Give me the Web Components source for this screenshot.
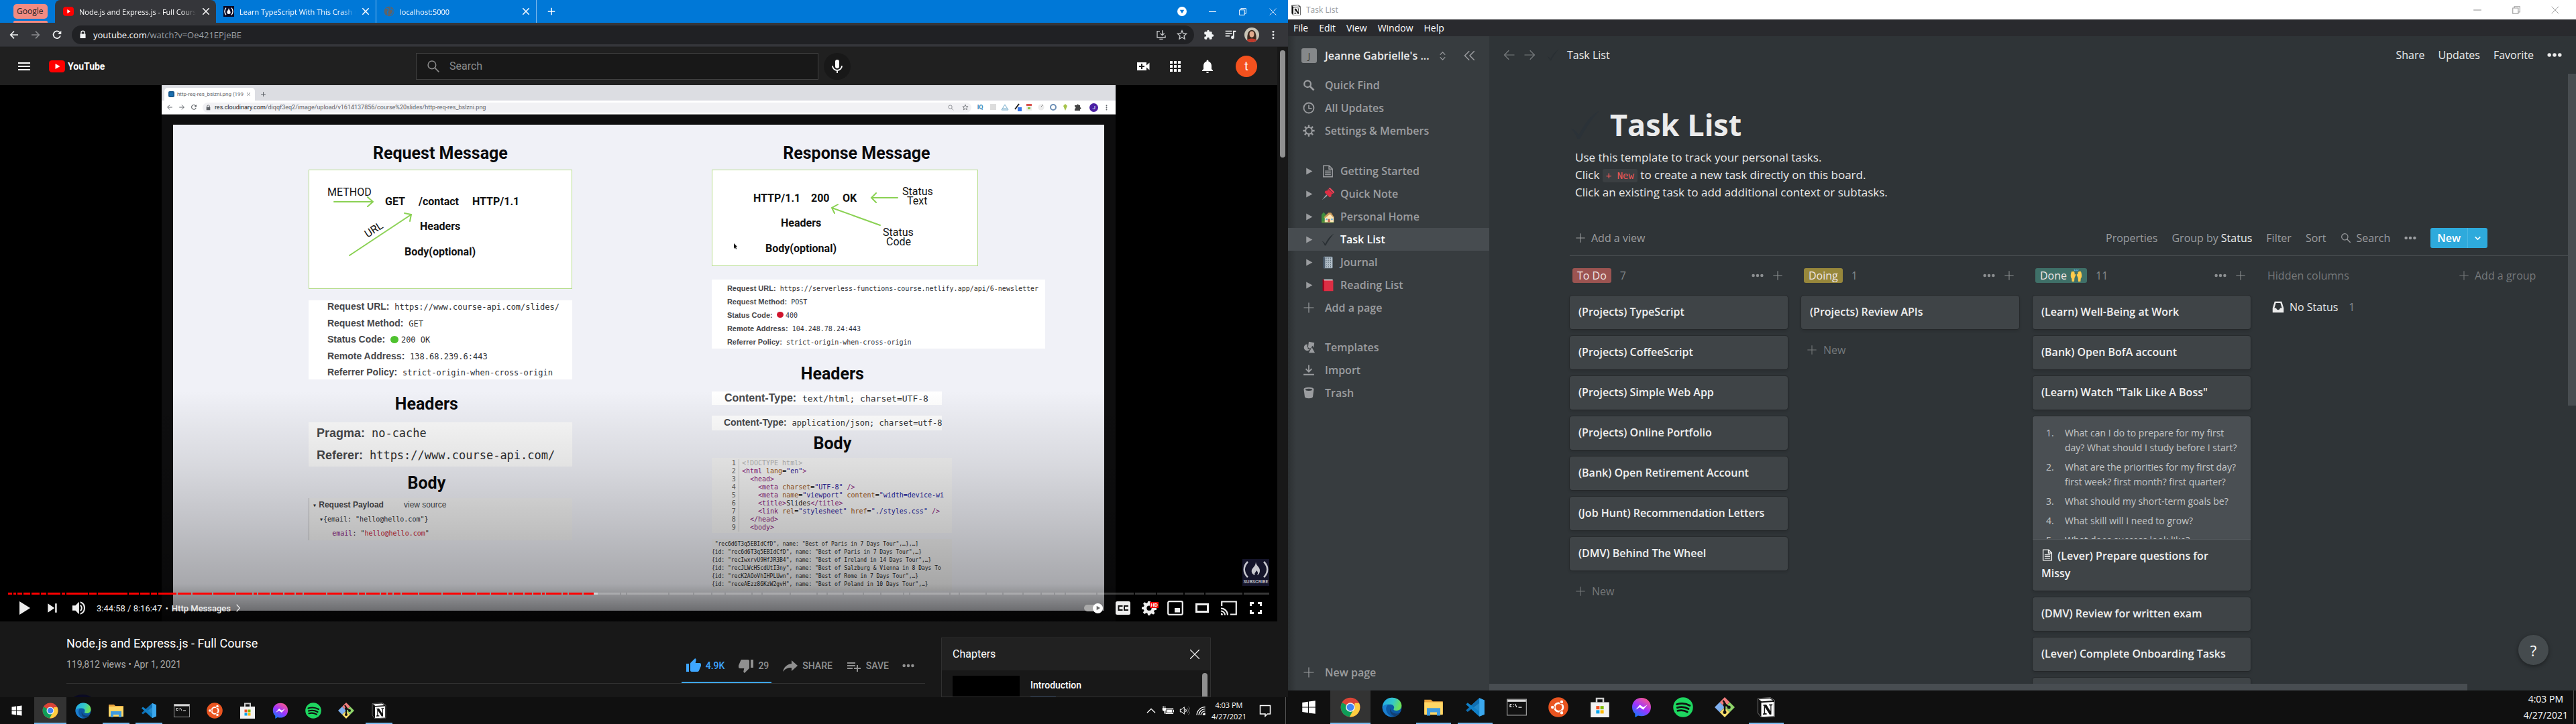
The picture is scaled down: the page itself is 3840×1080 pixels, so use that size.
<!DOCTYPE html>
<html lang="en">
<head>
<meta charset="utf-8">
<title>Desktop</title>
<style>
  html, body { height: 100%; }
  body { margin: 0; background: #000; overflow: hidden; font-family: "Open Sans", "Noto Sans", sans-serif; }
</style>
</head>
<body>
<dual-desktop></dual-desktop>
<script>
/* ---------- shared ---------- */
const BASE = `
  *, *::before, *::after { box-sizing: border-box; }
  button { appearance: none; border: 0; margin: 0; padding: 0; background: none; color: inherit; font: inherit; display: inline-flex; align-items: center; cursor: pointer; white-space: nowrap; }
  a { color: inherit; text-decoration: none; }
  h1, h2, h3, p, ol, ul, dl, dd, dt { margin: 0; padding: 0; }
  .grow { flex: 1; min-width: 0; }
`;
class Part extends HTMLElement {
  connectedCallback() {
    if (this.shadowRoot) return;
    const root = this.attachShadow({ mode: 'open' });
    const t = document.createElement('template');
    t.innerHTML = `<style>${BASE}${this.styles()}</style>${this.view()}`;
    root.append(t.content.cloneNode(true));
  }
  styles() { return ''; }
  view() { return '<slot></slot>'; }
}

/* ---------- icons, 24 x 24 grid ---------- */
const line = (d, w = 2, extra = '') => `<path d="${d}" fill="none" stroke="currentColor" stroke-width="${w}" ${extra}/>`;
const fill = (d, extra = '') => `<path d="${d}" fill="currentColor" ${extra}/>`;
const ICONS = {
  back: line('M21 12H4M12 4l-8 8 8 8', 2.4),
  forward: line('M3 12h17M12 4l8 8-8 8', 2.4),
  thinback: line('M22 12H2M11 3l-9 9 9 9', 1.6),
  thinforward: line('M2 12h20M13 3l9 9-9 9', 1.6),
  reload: line('M19.5 14a8 8 0 1 1-2-8l2.5 2.500', 2.6) + fill('M21.500 2.500v8h-8z'),
  lock: fill('M6 10V7a6 6 0 0 1 12 0v3h1.500v12h-15V10zM8.500 10h7V7a3.500 3.500 0 0 0-7 0z', 'fill-rule="evenodd"'),
  close: line('M4 4l16 16M20 4L4 20', 2.6),
  thinclose: line('M3 3l18 18M21 3L3 21', 1.6),
  plus: line('M12 3v18M3 12h18', 2.6),
  thinplus: line('M12 2v20M2 12h20', 1.6),
  minimize: line('M2 12h20', 2),
  restore: line('M3 7h14v14H3zM7 7V3h14v14h-4', 1.8),
  dropdown: '<circle cx="12" cy="12" r="12" fill="#fff"/><path d="M6.500 8h11L12 17z" fill="#0078d7"/>',
  globe: '<circle cx="12" cy="12" r="11" fill="#5f6368"/><path d="M5 5c5 0 7 2 5 5s-3 4-1 6-1 5-2 5M15 2c-1 4 1 6 3 6s4 2 3 5-3 5-6 7" fill="none" stroke="#0078d7" stroke-width="2"/>',
  install: line('M9 4H3v14h18v-5M8 21.500h8', 2) + line('M14.500 2v10M10 8.500l4.500 4.500L19 8.500', 2),
  star: line('M12 2.500l2.800 6.500 7 .6-5.300 4.600 1.600 6.900L12 17.500l-6.100 3.600 1.600-6.900L2.200 9.600l7-.6z', 2),
  puzzle: fill('M20.500 11H19V7c0-1.100-.9-2-2-2h-4V3.500a2.500 2.500 0 0 0-5 0V5H4c-1.100 0-2 .9-2 2v3.800h1.500a2.700 2.700 0 0 1 0 5.400H2V20c0 1.100.9 2 2 2h3.800v-1.500a2.700 2.700 0 0 1 5.400 0V22H17c1.100 0 2-.9 2-2v-4h1.500a2.500 2.500 0 0 0 0-5z'),
  queue: line('M1 5h14M1 10h14M1 15h9', 2.2) + fill('M17 4h6v3h-3.500v11a3.300 3.300 0 1 1-2.500-3.200z'),
  vdots: '<g fill="currentColor"><circle cx="12" cy="4" r="2.500"/><circle cx="12" cy="12" r="2.500"/><circle cx="12" cy="20" r="2.500"/></g>',
  hdots: '<g fill="currentColor"><circle cx="3.500" cy="12" r="3"/><circle cx="12" cy="12" r="3"/><circle cx="20.500" cy="12" r="3"/></g>',
  menu: fill('M3 6h18v2H3zM3 11h18v2H3zM3 16h18v2H3z'),
  ytlogo: '<rect y="3" width="24" height="18" rx="4.500" fill="#f00"/><path d="M9.500 8v8l7-4z" fill="#fff"/>',
  ytfav: '<rect y="2" width="24" height="20" rx="6" fill="#f00"/><path d="M9.500 7.500v9l7-4.500z" fill="#fff"/>',
  search: '<circle cx="9.500" cy="9.500" r="7" fill="none" stroke="currentColor" stroke-width="1.800"/>' + line('M14.500 14.500L22 22', 2),
  boldsearch: '<circle cx="9.500" cy="9.500" r="6.500" fill="none" stroke="currentColor" stroke-width="3"/>' + line('M14 14l8 8', 3.6),
  mic: '<rect x="9" y="2" width="6" height="13" rx="3" fill="currentColor"/>' + line('M5 11a7 7 0 0 0 14 0M12 18v4', 1.8),
  create: fill('M17 10.500V6H3v12h14v-4.500l4.500 4V6.500zM14 13h-3v3H9v-3H6v-2h3V8h2v3h3z', 'fill-rule="evenodd"'),
  apps: fill('M4 4h4v4H4zM10 4h4v4h-4zM16 4h4v4h-4zM4 10h4v4H4zM10 10h4v4h-4zM16 10h4v4h-4zM4 16h4v4H4zM10 16h4v4h-4zM16 16h4v4h-4z'),
  bell: fill('M12 22a2 2 0 0 0 2-2h-4a2 2 0 0 0 2 2zM18 16v-5c0-3-1.600-5.600-4.500-6.300V4a1.500 1.500 0 0 0-3 0v.7C7.600 5.400 6 8 6 11v5l-2 2v1h16v-1z'),
  play: fill('M5 2l16 10L5 22z'),
  next: fill('M4 4l12 8-12 8zM17 4h3v16h-3z'),
  volume: fill('M2 8v8h5l6 6V2L7 8z') + line('M15 7.500c3 2 3 7 0 9M15 2.500c9 3 9 16 0 19', 2.2),
  chevr: line('M8 3l8 9-8 9', 2),
  chevd: line('M5 9l7 7 7-7', 3),
  chevu: line('M3 17l9-9 9 9', 2),
  cc: '<rect x="1" y="2" width="22" height="20" rx="2.500" fill="#eee"/><path d="M10.500 10V9h-5v6h5v-1M19 10V9h-5v6h5v-1" fill="none" stroke="#111" stroke-width="2"/>',
  gear: fill('M10 1h4l.6 3.200 2 .9L19.400 3.300l2.600 3-1.700 2.600.5 2L24 12v3l-3.300.6-1 2 1.700 2.700-2.700 2.400-2.600-1.700-2 .8L13.500 24h-3.400l-.8-3.200-2-.9-2.800 1.800-2.500-2.600 1.900-2.700-.8-1.900L0 14v-3.500l3.200-.7.900-2L2.300 5l2.500-2.500 2.600 1.800 2-.9zM12 8.200a4 4 0 1 0 0 8 4 4 0 0 0 0-8z', 'fill-rule="evenodd"'),
  mini: '<rect x="1.200" y="2.200" width="21.600" height="19.600" rx="2" fill="none" stroke="currentColor" stroke-width="2.200"/>' + fill('M11 12h8v6.500h-8z'),
  theater: '<rect x="3.500" y="6.500" width="17" height="11" fill="none" stroke="currentColor" stroke-width="3"/>',
  cast: line('M1.200 9V2.500h21.600v19H14', 2.2) + line('M0 12.500A10 10 0 0 1 10 22.500M0 16.500a6 6 0 0 1 6 6', 2) + fill('M0 19.500a3 3 0 0 1 3 3H0z'),
  full: line('M4.500 9V4.500H9M15 4.500h4.500V9M19.500 15v4.500H15M9 19.500H4.500V15', 3),
  like: fill('M1 21h4V9H1zM23 10c0-1.100-.9-2-2-2h-6.300l1-4.600v-.3c0-.4-.2-.8-.5-1.100L14.200 1 7.600 7.600C7.200 8 7 8.500 7 9v10c0 1.100.9 2 2 2h9c.8 0 1.500-.5 1.800-1.200l3-7c.1-.3.200-.5.200-.8z'),
  dislike: fill('M15 3H6c-.8 0-1.500.5-1.800 1.200l-3 7c-.1.200-.2.500-.2.700v2c0 1.100.9 2 2 2h6.300l-1 4.600v.3c0 .4.200.8.500 1.100L9.800 23l6.600-6.600c.4-.4.600-.9.600-1.400V5c0-1.100-.9-2-2-2zm4 0v12h4V3z'),
  share: fill('M14 9V4l9 8-9 8v-5.100c-6 0-10 1.900-13 6.100 1.500-6 5-11 13-12z'),
  save: fill('M2 6h12v2H2zM2 10h12v2H2zM2 14h8v2H2zM20 14h-2v-4h-2v4h-4v2h4v4h2v-4h4v-2z', 'transform="translate(0 1)"'),
  power: '<rect x="8" y="8" width="14" height="10" fill="none" stroke="currentColor" stroke-width="1.500"/><path d="M10 10h10v6H10zM22.500 11h1.500v4h-1.500zM1 7h7v3a3 3 0 0 1-2.500 3v5H4v-5a3 3 0 0 1-3-3zM2 3h1.500v4H2zM5.500 3H7v4H5.500z" fill="currentColor"/>',
  speaker: line('M2 9h4l5-5v16l-5-5H2z', 1.500) + line('M14 9c2 2 2 4 0 6', 1.6) + line('M17 6c4 4 4 8 0 12M20 3c6 6 6 12 0 18', 1.4, 'opacity=".45"'),
  wifi: fill('M16 22a5 5 0 0 1 6-5v5z') + line('M12 22a10 10 0 0 1 10-9M7.500 22A14 14 0 0 1 22 8.500M3 22A19 19 0 0 1 22 4', 2),
  note: line('M3 3h18v15h-5l-4 4v-4H3z', 1.8),
  doublechev: line('M11 3l-9 9 9 9M21 3l-9 9 9 9', 2),
  updown: line('M6 9l6-6 6 6M6 15l6 6 6-6', 2),
  clock: '<circle cx="12" cy="12" r="10" fill="none" stroke="currentColor" stroke-width="2.400"/>' + line('M12 6v7h6', 2.2),
  cog: '<circle cx="12" cy="12" r="6.500" fill="none" stroke="currentColor" stroke-width="2.600"/>' + line('M12 .5v5M12 18.500v5M.5 12h5M18.500 12h5M3.900 3.900l3.500 3.500M16.600 16.600l3.500 3.500M3.900 20.100l3.500-3.500M16.600 7.400l3.500-3.500', 3.2),
  tri: fill('M6 5l13 7-13 7z'),
  doc: line('M3.500 1.500h11l6 6v15h-17zM14 1.500V8h6.500', 1.8) + line('M6.500 11.500h11M6.500 15h11M6.500 18.500h11', 1.8),
  pin: '<path d="M1 23l8-10 2 2z" fill="#9aa8b2"/><path d="M12 2l10 9-3 1-1 5-3 1-9-9 1-3 5-1z" fill="#dd2e44"/><path d="M13 1l3-1 8 8-1 3z" fill="#f0485c"/>',
  house: '<path d="M0 23V8l4-5 5 6v14z" fill="#3e8e3e"/><path d="M1 20h22v3H1z" fill="#5c913b"/><path d="M6 12l8-7 9 7v10H6z" fill="#ffe8b6"/><path d="M4 13l9-9 5 0 6 9-3-1-5-5-9 7z" fill="#c79a5a"/><path d="M12 16h4v6h-4z" fill="#c1694f"/><path d="M8 15h3v3H8zM18 15h3v3h-3z" fill="#55acee"/>',
  check: '<path d="M1 15c2 0 4 2 6 5C11 12 16 5 23 1 17 8 12 15 8 23H6c-1-3-3-6-5-8z" fill="currentColor"/>',
  journal: '<rect x="3" y="1" width="18" height="22" rx="2" fill="#8899a6"/><path d="M7 3h13v19H7z" fill="#b9c6d0"/><path d="M7 5h13M7 9h13M7 13h13M7 17h13M9 3v19M13 3v19M17 3v19" stroke="#66757f" stroke-width="1.300" stroke-dasharray="2 2"/><path d="M3 2h3v21H3z" fill="#3b4a5a"/>',
  book: '<path d="M3 1h18v3H3z" fill="#dfe6ea"/><path d="M2 2c0-1 2-1 3-1v22H4c-1 0-2-1-2-2z" fill="#a0041e"/><path d="M5 3h17v20H5z" fill="#dd2e44"/>',
  templates: fill('M10 12h-1V6a6.500 6.500 0 1 0 5 10.500L10 15z') + fill('M12 1l11 2-1.500 10-2-4-5 6-4-3z') + fill('M18 12l6 11H12z'),
  import: line('M12 2v13M6 9.500l6 6 6-6M1.500 21h21', 2.4),
  trash: fill('M12 1C6 1 2 2.500 2 5l2 15c.5 2 4 3 8 3s7.500-1 8-3l2-15c0-2.500-4-4-10-4zm0 2.500c4.500 0 7 1.100 7 2.200S16.500 8 12 8 5 6.800 5 5.700 7.500 3.500 12 3.500z', 'fill-rule="evenodd"'),
  inbox: fill('M5 1h14l4 13v9H1v-9zm2.500 3l-3 10H8c.5 2 2 3.500 4 3.500s3.500-1.500 4-3.500h3.500l-3-10z', 'fill-rule="evenodd"'),
  hands: '<path d="M1 12c0-2 1-7 2-8s1.500 0 1.500 1C5 3 6 3 6.500 4S8 4 8.500 5.500 9 9 8.800 10c1-1.500 2.700-.5 2.200 1l-2.500 6L8 24H3.500L3 18c-1.500-1.500-2-4-2-6zM23 12c0-2-1-7-2-8s-1.500 0-1.500 1C19 3 18 3 17.500 4S16 4 15.500 5.500 15 9 15.200 10c-1-1.500-2.700-.5-2.200 1l2.500 6 .5 7h4.500l.5-6c1.500-1.500 2-4 2-6z" fill="#ffcb4c"/><path d="M8 0l1.500 3M12 0v3M16 0l-1.500 3" stroke="#55acee" stroke-width="1.800"/>',
  fcc: '<rect width="24" height="24" fill="#0a0a23"/><path d="M6 4C2 9 2 15 6 20M18 4c4 5 4 11 0 16" stroke="#fff" stroke-width="2" fill="none"/><path d="M12 4c0 4 4 6 4 10a4 4 0 0 1-8 0c0-3 3-4 4-10z" fill="#fff"/>',
  person: '<circle cx="12" cy="12" r="12" fill="#c9c4b6"/><path d="M5 21c-1-6 0-17 7-17s8 11 7 17l-7 3z" fill="#3d2a20"/><ellipse cx="12" cy="11" rx="3.800" ry="5" fill="#e0a98c"/><path d="M4 21c2-4 14-4 16 0a12 12 0 0 1-16 0z" fill="#c0392b"/>',
  /* task bar */
  win: fill('M3 5.500l8-1.200v7.200H3zM12 4.200L21 3v8.500h-9zM3 12.500h8v7.200l-8-1.200zM12 12.500h9V21l-9-1.200z'),
  chrome: '<circle cx="12" cy="12" r="11.500" fill="#db4437"/><path d="M2 6.300A11.500 11.500 0 0 0 11 23.400L17 14.800 12 12z" fill="#0f9d58"/><path d="M23.500 12A11.500 11.500 0 0 1 11 23.500L17.200 12V7H22.400A11.500 11.500 0 0 1 23.500 12z" fill="#ffcd40"/><circle cx="12" cy="12" r="5.500" fill="#f1f1f1"/><circle cx="12" cy="12" r="4.300" fill="#4285f4"/>',
  edge: '<defs><linearGradient id="ea" x1="0" y1="0" x2="1" y2=".3"><stop offset="0" stop-color="#1fa7e8"/><stop offset=".6" stop-color="#35c8c8"/><stop offset="1" stop-color="#6be05a"/></linearGradient></defs><circle cx="12" cy="12" r="11.500" fill="#0c59a4"/><path d="M.6 12C1 5 6 .5 12 .5c7 0 11.500 4.500 11.500 9.500 0 4-3 6-6.500 6-2.500 0-3.500-1-3-2 1.500-2 0-5.500-4-5.500C5 8.500 1.500 11 .6 12z" fill="url(#ea)"/><path d="M.5 12C2 9 5 8.300 8 8.300c-3 2-4 6-2 9.700 2 4 6 5.500 8 5.300C7 24.500.5 19 .5 12z" fill="#1b7fd0"/><path d="M10 13c0 4 3 6.500 7 6.500 2 0 3.500-.5 4.500-1-1 2-3 3.700-5 4.300-5-.5-8-5-6.500-9.800z" fill="#123f73"/>',
  explorer: '<path d="M1 3h8l2 2h12v15H1z" fill="#e8a33d"/><path d="M1 6h22v15H1z" fill="#ffd766"/><path d="M4 13h16v9h-4v-4H8v4H4z" fill="#3f9be0"/>',
  vscode: '<path d="M17 1l6 2.500v17L17 23 5 12z" fill="#2489ca"/><path d="M17 1L1 15.500l2 2L17 7z" fill="#0f6fb3"/><path d="M17 23L1 8.500l2-2L17 17z" fill="#1080c8"/><path d="M17 1l6 2.500v17L17 23z" fill="#3ba8ee"/>',
  terminal: '<rect x=".5" y="2.500" width="23" height="19" fill="#111" stroke="#9a9a9a"/><path d="M1 3h22v2.500H1z" fill="#d8d8d8"/><path d="M4 8.500h2M4 8.500v3h2M8 8v1M8 10.500v1M10 8l2 4M14 12h4" stroke="#eee" fill="none"/>',
  ubuntu: '<circle cx="12" cy="12" r="11.800" fill="#e95420"/><circle cx="12.500" cy="12" r="5" fill="none" stroke="#fff" stroke-width="2.200"/><g fill="#fff" stroke="#e95420" stroke-width="1"><circle cx="5" cy="12" r="2.300"/><circle cx="16" cy="5.500" r="2.300"/><circle cx="16" cy="18.500" r="2.300"/></g>',
  store: '<path d="M8 6V1.500h8V6" fill="none" stroke="#ccc" stroke-width="2"/><path d="M1 6h22v18H1z" fill="#f2f2f2"/><path d="M7.500 10.500h4v4h-4z" fill="#f25022"/><path d="M12.500 10.500h4v4h-4z" fill="#7fba00"/><path d="M7.500 15.500h4v4h-4z" fill="#00a4ef"/><path d="M12.500 15.500h4v4h-4z" fill="#ffb900"/>',
  messenger: '<defs><linearGradient id="ma" x1=".2" y1="1" x2=".8" y2="0"><stop offset="0" stop-color="#0a7cff"/><stop offset=".5" stop-color="#a033ff"/><stop offset="1" stop-color="#ff5c87"/></linearGradient></defs><path d="M12 .8C5.500.8.800 5.500.800 11.700c0 3.300 1.300 6.100 3.500 8.100V24l3.600-2c1.300.4 2.700.6 4.100.6 6.500 0 11.200-4.700 11.200-10.900S18.500.8 12 .8z" fill="url(#ma)"/><path d="M5 15l5-6 4 3 5-3-5 6-4-3z" fill="#fff"/>',
  spotify: '<circle cx="12" cy="12" r="11.800" fill="#1ed760"/><path d="M4.500 8.500c5-1.600 11-1 15.500 1.500M5 12.500c4.500-1.300 9.500-.8 13.500 1.500M5.500 16.200c4-1 8-.6 11.500 1.400" stroke="#101010" stroke-width="2.200" fill="none" stroke-linecap="round"/>',
  git: '<path d="M12 0l6 6-6 6-6-6z" fill="#f27e7e"/><path d="M6 6l6 6-6 6-6-6z" fill="#7fb0f0"/><path d="M18 6l6 6-6 6-6-6z" fill="#8fd46a"/><path d="M12 12l6 6-6 6-6-6z" fill="#f7dd6c"/><path d="M10 4l2 3v11M12 8l5 4" stroke="#111" stroke-width="2" fill="none"/><circle cx="12" cy="18" r="2" fill="#111"/><circle cx="12" cy="9" r="2" fill="#111"/><circle cx="17" cy="12" r="2" fill="#111"/>',
  notion: '<path d="M2 1.500L17 .5l5 3.500v19l-16 1-4-5z" fill="#111" stroke="#777" stroke-width=".8"/><path d="M3 2.500l13.500-1L20 4 6.500 5z" fill="#fff"/><path d="M6 6.500l15-1v17L6 23.300z" fill="#fff"/><path d="M8.500 9l3.500-.2 5 8V10l-1.700-.3V8.500l4-.2v1.200L18 10v10.500l-2 .2-5.500-8.500V19l2 .4v1.100l-4.500.3v-1.200l1.300-.5V10.200L8 10z" fill="#111"/>'
};
class UiIcon extends Part {
  styles() { const s = this.getAttribute('size') || 24; return `:host{display:inline-flex;flex:none;width:${s}px;height:${s}px} svg{width:100%;height:100%;display:block}`; }
  view() { return `<svg viewBox="0 0 24 24" aria-hidden="true">${ICONS[this.getAttribute('name')]}</svg>`; }
}
const ic = (n, s = 24) => `<ui-icon name="${n}" size="${s}"></ui-icon>`;
const ib = (label, n, s = 24, c = '') => `<button class="${c}" aria-label="${label}">${ic(n, s)}</button>`;

/* ---------- desktop ---------- */
class DualDesktop extends Part {
  styles() { return `
    :host { display: flex; height: 100vh; }
    .mon { flex: 1; min-width: 0; display: flex; flex-direction: column; overflow: hidden; }
    .mon > :first-child { flex: 1; min-height: 0; }
    .b { --bar: 50px; --start: 61px; --cell: 60px; --gap: 2px; --under: 52px; --clock: 14px; --clockline: 24px; }
    .tray { display: flex; align-items: center; gap: 8px; }`; }
  view() { return `
    <div class="mon a"><browser-window></browser-window>
      <task-bar icon="24"><span slot="tray" class="tray">${ic('chevu', 16)}${ic('power', 18)}${ic('speaker', 16)}${ic('wifi', 16)}</span><ui-icon slot="end" name="note" size="20"></ui-icon></task-bar></div>
    <div class="mon b"><notion-window></notion-window><task-bar icon="30"></task-bar></div>`; }
}
class TaskBar extends Part {
  styles() { return `
    :host { display: flex; flex: none; height: var(--bar, 40px); background: #101010; color: #fff; }
    nav { display: flex; gap: var(--gap, 1px); flex: 1; }
    button { width: var(--cell, 48px); flex-direction: column; justify-content: center; position: relative; }
    .start { width: var(--start, 50px); }
    .on::after { content: ""; position: absolute; bottom: 0; height: 2px; width: var(--under, 40px); background: #76b9ed; }
    .active { background: #333; }
    .active::after { width: 100%; }
    .clock { display: flex; flex-direction: column; text-align: center; justify-content: center; font-size: var(--clock, 11px); line-height: var(--clockline, 17px); padding: 0 8px; }
    ::slotted([slot=end]) { align-self: center; margin: 0 20px 0 10px; }
    .peek { border-left: 1px solid #555; width: 4px; }`; }
  view() {
    const s = this.getAttribute('icon');
    const apps = [['Chrome', 'chrome', 'on active'], ['Edge', 'edge', ''], ['File Explorer', 'explorer', 'on'], ['Visual Studio Code', 'vscode', 'on'], ['Terminal', 'terminal', ''], ['Ubuntu', 'ubuntu', ''], ['Store', 'store', ''], ['Messenger', 'messenger', ''], ['Spotify', 'spotify', ''], ['Git', 'git', ''], ['Notion', 'notion', 'on']];
    return `<nav>${ib('Start', 'win', s - 4, 'start')}${apps.map(a => ib(a[0], a[1], s, a[2])).join('')}</nav>
      <slot name="tray"></slot><div class="clock"><span>4:03 PM</span><span>4/27/2021</span></div><slot name="end"></slot><span class="peek"></span>`;
  }
}

/* ---------- browser ---------- */
class BrowserTab extends Part {
  styles() { return `
    :host { display: flex; align-items: center; width: 239px; height: 34px; padding: 0 8px 0 11px; gap: 8px; font-size: 11px; color: #fff; }
    :host([active]) { background: #35363a; border-radius: 8px 8px 0 0; width: 240px; padding-left: 12px; }
    :host([sep]) { border-right: 1px solid #7fbbeb; }
    .t { flex: 1; overflow: hidden; white-space: nowrap; mask-image: linear-gradient(90deg, #000 88%, transparent); }`; }
  view() { return `${ic(this.getAttribute('icon'), 16)}<span class="t"><slot></slot></span>${ib('Close tab', 'close', 14)}`; }
}
class BrowserWindow extends Part {
  styles() { return `
    :host { display: flex; flex-direction: column; background: #181818; overflow: hidden; }
    .tabs { display: flex; align-items: center; height: 34px; flex: none; background: #0078d7; color: #fff; padding-left: 20px; }
    .group { align-self: stretch; display: flex; flex-direction: column; justify-content: space-between; margin-right: 11px; padding-top: 6px; }
    .group b { font-weight: 400; font-size: 12px; line-height: 22px; background: #f28b82; color: #202124; border-radius: 5px; padding: 0 5px; width: 51px; }
    .group i { height: 3px; background: #f28b82; border-radius: 2px 2px 0 0; }
    .new { margin-left: 15px; }
    .win { display: flex; gap: 32px; margin-right: 16px; }
    .bar { display: flex; align-items: center; height: 36px; flex: none; background: #35363a; border-bottom: 1px solid #2a2b2e; color: #f1f3f4; padding: 0 6px 0 13px; gap: 16px; }
    .url { display: flex; align-items: center; height: 28px; flex: 1; background: #202124; border-radius: 14px; padding: 0 10px; gap: 9px; font-size: 13px; margin-left: -2px; }
    .url span { color: #9aa0a6; } .url em { font-style: normal; color: #fff; }
    .dim { color: #8a8b8e; } .soft { color: #c6c8ca; margin-left: 6px; }
    .ext { display: flex; margin-left: -10px; }
    .ext button { width: 32px; justify-content: center; }
    .page { display: flex; flex: 1; min-height: 0; }
    .content { flex: 1; min-width: 0; display: flex; flex-direction: column; }
    .sb { width: 16px; background: #181818; padding: 5px 4px; }
    .sb i { display: block; height: 160px; border-radius: 4px; background: #909090; }`; }
  view() { return `
    <div class="tabs"><div class="group"><b>Google</b><i></i></div>
      <browser-tab active icon="ytfav">Node.js and Express.js - Full Course</browser-tab>
      <browser-tab sep icon="fcc">Learn TypeScript With This Crash Course</browser-tab>
      <browser-tab sep icon="globe">localhost:5000</browser-tab>
      ${ib('New tab', 'plus', 14, 'new')}<span class="grow"></span>
      <div class="win">${ib('Tab search', 'dropdown', 14)}${ib('Minimize', 'minimize', 13)}${ib('Restore', 'restore', 13)}${ib('Close', 'thinclose', 13)}</div></div>
    <div class="bar">${ib('Back', 'back', 16)}${ib('Forward', 'forward', 16, 'dim')}${ib('Reload', 'reload', 16)}
      <div class="url" role="textbox" tabindex="0" aria-label="Address">${ic('lock', 13)}<span><em>youtube.com</em>/watch?v=Oe421EPjeBE</span><span class="grow"></span>
      ${ib('Install', 'install', 16, 'soft')}${ib('Bookmark', 'star', 16, 'soft')}</div>
      <div class="ext">${ib('Extensions', 'puzzle', 16)}${ib('Media', 'queue', 17)}${ib('Profile', 'person', 22)}${ib('More', 'vdots', 14)}</div></div>
    <div class="page"><div class="content"><yt-header></yt-header><video-player></video-player><video-info></video-info></div><div class="sb"><i></i></div></div>`; }
}
class YtHeader extends Part {
  styles() { return `
    :host { display: flex; align-items: center; height: 57px; flex: none; background: #202020; color: #fff; padding: 0 30px 0 24px; font-family: Roboto, sans-serif; }
    .logo { display: flex; align-items: center; gap: 4px; margin-left: 25px; font: 700 14px/24px Roboto, sans-serif; width: 150px; }
    .mid { display: flex; flex: 1; justify-content: center; gap: 8px; padding-right: 27px; }
    label { display: flex; align-items: center; gap: 14px; width: 600px; height: 40px; border: 1px solid #404040; background: #181818; padding: 0 15px; color: #8c8c8c; }
    input { flex: 1; border: 0; background: none; outline: 0; color: #fff; font: 16px/24px Roboto, sans-serif; padding: 0; }
    input::placeholder { color: #8c8c8c; opacity: 1; }
    .mic { width: 40px; height: 40px; border-radius: 50%; background: #181818; justify-content: center; }
    .right { display: flex; align-items: center; gap: 24px; }
    .av { width: 32px; height: 32px; border-radius: 50%; background: #f4511e; justify-content: center; margin-left: 6px; font-size: 18px; }`; }
  view() { return `${ib('Guide', 'menu', 24)}<a class="logo" href="#">${ic('ytlogo', 24)}<span>YouTube</span></a>
    <div class="mid"><label aria-label="Search">${ic('search', 20)}<input placeholder="Search"></label><button class="mic" aria-label="Voice search">${ic('mic', 24)}</button></div>
    <div class="right">${ib('Create', 'create', 24)}${ib('Apps', 'apps', 24)}${ib('Notifications', 'bell', 24)}<button class="av">t</button></div>`; }
}

/* ---------- player ---------- */
const MARKS = [12,20,26,35,47,61,71,92,99,133,146,192,209,225,236,265,287,318,352,378,385,404,424,441,453,488,512,535,546,568,578,587,599,625,660,689,711,732,758,766,782,795,808,814,839,848,870,926,935,998,1034,1061,1081,1121,1136,1178,1218,1233,1257,1287,1313,1347,1356,1416,1430,1470,1495,1525,1552,1572,1588,1635,1691,1724,1765,1796,1853,1893];
const PLAYED = 885;
class VideoPlayer extends Part {
  styles() { return `
    :host { display: flex; justify-content: center; position: relative; height: 800px; flex: none; background: #000; overflow: hidden; font-family: Roboto, sans-serif; color: #eee; }
    .shade { position: absolute; inset: 0; background: linear-gradient(180deg, transparent 57%, rgba(0,0,0,.03) 61%, rgba(0,0,0,.1) 71%, rgba(0,0,0,.2) 82%, rgba(0,0,0,.3) 93%, rgba(0,0,0,.55) 98%, rgba(0,0,0,.7)); }
    .chrome { position: absolute; left: 12px; right: 12px; bottom: 0; }
    .track { display: flex; gap: 2px; height: 3px; }
    .track i { background: rgba(255,255,255,.22); }
    .track .p { background: #f00; }
    .track .h { background: linear-gradient(90deg, #f00 27%, rgba(255,255,255,.6) 27% 38%, rgba(255,255,255,.22) 38%); }
    .row { display: flex; align-items: center; height: 40px; gap: 16px; padding: 0 8px 0 12px; font-size: 13px; }
    .next { margin: 0 2px 0 4px; }
    .time { display: flex; align-items: center; gap: 5px; white-space: nowrap; }
    .time button { gap: 4px; font-weight: 500; }
    .auto { width: 28px; height: 10px; border-radius: 5px; background: #aaa; justify-content: flex-end; margin-right: 2px; }
    .auto span { width: 15px; height: 15px; border-radius: 50%; background: #fff; color: #666; display: flex; align-items: center; justify-content: center; }
    .row button { position: relative; }
    .hd { position: absolute; right: -3px; top: 2px; background: #e00; color: #fff; font: 700 8px/9px Roboto, sans-serif; padding: 0 1px; }
    .badge { position: absolute; right: 12px; bottom: 53px; width: 40px; height: 40px; background: #15152b; color: #c8c8ce; display: flex; flex-direction: column; align-items: center; font: 500 7px/9px Roboto, sans-serif; }
    .badge svg { width: 40px; height: 30px; }`; }
  view() {
    const seg = MARKS.slice(0, -1).map((m, i) => {
      const n = MARKS[i + 1];
      return `<i class="${n <= PLAYED ? 'p' : m < PLAYED ? 'h' : ''}" style="flex:${n - m - 2} 1 0"></i>`;
    }).join('');
    const bs = (l, n, s) => ib(l, n, s);
    return `<screen-share></screen-share><div class="shade"></div>
      <div class="badge"><svg viewBox="0 0 40 30"><path d="M8 4C1 11 1 20 8 27M32 4c7 7 7 16 0 23" fill="none" stroke="currentColor" stroke-width="2.500"/><path d="M20 4c0 6 7 8 6 14-.5 4-3 6-4 6 2-3 1-5-1-7-1 3-4 4-2 7-4-1-6-4-5-8 2-4 6-6 6-12z" fill="currentColor"/></svg>SUBSCRIBE</div>
      <div class="chrome"><div class="track">${seg}</div><div class="row">${bs('Play', 'play', 24)}<button class="next" aria-label="Next">${ic('next', 20)}</button>${bs('Mute', 'volume', 22)}
      <span class="time"><span>3:44:58 / 8:16:47</span><span>•</span><button>Http Messages ${ic('chevr', 14)}</button></span><span class="grow"></span>
      <button class="auto" aria-label="Autoplay"><span>${ic('play', 8)}</span></button>${bs('Captions', 'cc', 24)}<button aria-label="Settings">${ic('gear', 22)}<span class="hd">HD</span></button>${bs('Miniplayer', 'mini', 24)}${bs('Theater mode', 'theater', 24)}${bs('Cast', 'cast', 24)}${bs('Full screen', 'full', 24)}</div></div>`;
  }
}
class ScreenShare extends Part {
  styles() { return `
    :host { display: flex; flex-direction: column; height: 100%; aspect-ratio: 16 / 9; background: #0e0e0f; font-family: Roboto, sans-serif; color: #5f6368; }
    .tabs { display: flex; align-items: flex-end; height: 23px; background: #dcdde2; padding: 0 4px; gap: 8px; }
    .tab { display: flex; align-items: center; width: 135px; height: 19px; padding: 0 6px; gap: 4px; background: #fff; border-radius: 5px 5px 0 0; font-size: 8px; white-space: nowrap; overflow: hidden; }
    .tab span { flex: 1; overflow: hidden; }
    .tabs > ui-icon { margin-bottom: 5px; }
    .fav { width: 9px; height: 9px; background: #1a6fb0; border: 2px solid #1a5a90; border-radius: 2px; }
    .bar { display: flex; align-items: center; height: 21px; background: #fff; border-bottom: 1px solid #aaa; padding: 0 9px 0 7px; gap: 8px; }
    .url { flex: 1; display: flex; align-items: center; gap: 5px; height: 15px; border-radius: 8px; background: #f1f1f4; padding: 0 4px; font-size: 9px; }
    .url em { font-style: normal; color: #202124; }
    .j { width: 13px; height: 13px; border-radius: 50%; background: #4b1fa3; color: #fff; font-size: 8px; line-height: 13px; text-align: center; }
    .x { font-size: 9px; line-height: 12px; font-weight: 700; color: #3b87b5; width: 10px; text-align: center; }
    slide-deck { flex: 1; margin: 15px 17px 16px; }
    .x, .bar > ui-icon { flex: none; }`; }
  view() { return `
    <div class="tabs"><div class="tab"><i class="fav"></i><span>http-req-res_bslzni.png (1998</span>${ic('close', 7)}</div>${ic('plus', 9)}</div>
    <div class="bar">${ic('back', 10)}${ic('forward', 10)}${ic('reload', 10)}
      <div class="url">${ic('lock', 9)}<span><em>res.cloudinary.com</em>/diqqf3eq2/image/upload/v1614137856/course%20slides/http-req-res_bslzni.png</span><span class="grow"></span>${ic('search', 9)}&nbsp;${ic('star', 10)}</div>
      <span class="x">IQ</span>
      <svg width="142" height="12" viewBox="0 0 142 12"><rect x="2" y="1" width="9" height="9" fill="#ddd"/><path d="M19 10l5-8 5 8zM21 8h6" fill="none" stroke="#6fa8c9"/><path d="M39 9l6-8" stroke="#222" stroke-width="2"/><rect x="43" y="6" width="6" height="6" fill="#3b78e7"/><path d="M56 2h8v9h-8z" fill="#eee"/><path d="M56 1h8v3h-8z" fill="#d9534f"/><path d="M58 6h4v3h-4z" fill="#8bc34a"/><circle cx="78" cy="6" r="4.500" fill="#ececec"/><path d="M78 5l3-3" stroke="#777"/><circle cx="96" cy="6" r="4" fill="none" stroke="#6d8fb5" stroke-width="2"/><path d="M111 4l3-3 3 3-3 7z" fill="#a6c34b"/><path d="M128 3h3a1.500 1.500 0 0 1 3 0h2v3a1.500 1.500 0 0 1 0 3v2h-8V8a1.500 1.500 0 0 0 0-3z" fill="#444"/></svg>
      <span class="j">J</span>${ic('vdots', 9)}</div>
    <slide-deck></slide-deck>`; }
}
class KvCard extends Part {
  styles() { return `
    :host { display: flex; flex-direction: column; justify-content: space-between; background: #fff; white-space: pre; overflow: hidden; font: 700 14px/16px "Liberation Sans", sans-serif; color: #47484b; }`; }
}
class SlideDeck extends Part {
  styles() { return `
    :host { display: flex; background: #f0f1f7; color: #0a0a0c; padding: 28px 0 0 202px; min-height: 0; }
    .l { width: 601px; } .r { flex: 1; min-width: 0; }
    .l, .r { display: flex; flex-direction: column; align-items: flex-start; }
    h2 { font: 700 25px/30px Roboto, sans-serif; text-align: center; }
    .l h2 { width: 352px; } .r h2 { width: 360px; }
    .l h2.top { width: 393px; } .r h2.top { width: 432px; }
    .box { display: block; background: #fff; border: 1px solid #b5dc8a; margin-top: 9px; }
    .box text { font: 700 16px Roboto, sans-serif; fill: #111; }
    .box .n { font-weight: 400; }
    .box path.g { fill: none; stroke: #8ad153; stroke-width: 2; stroke-linecap: round; }
    code { font: 400 12px/16px "DejaVu Sans Mono", monospace; color: #2f3033; }
    kv-card { width: 393px; }
    .k1 { height: 118px; padding: 1px 0 2px 28px; margin: 17px 0 22px; }
    .dot { display: inline-block; width: 12px; height: 11px; border-radius: 50%; background: #4fc22f; vertical-align: -1px; }
    .dot.red { background: #d0142c; width: 10px; height: 9px; vertical-align: 0; }
    .k2 { font-size: 18px; line-height: 33px; margin: 12px 0 10px; padding-left: 12px; background: #fcfcfc; }
    .k2 code { font-size: 17px; line-height: 33px; }
    .k3 { font-size: 12px; line-height: 20px; margin-top: 7px; padding-left: 5px; background: #f3f3f3; border-left: 1px solid #bbb; }
    .k3 code { font-size: 10px; line-height: 20px; } .k3 small { font: 400 12px/20px "Liberation Sans", sans-serif; }
    .k4 { width: 497px; height: 103px; font-size: 11px; line-height: 20px; margin: 20px 0 23px; padding: 3px 0 0 23px; }
    .k4 code { font-size: 10px; line-height: 16px; }
    .k5 { width: 343px; font-size: 16px; line-height: 19px; padding-left: 19px; margin: 11px 0 16px; }
    .k5 code { font-size: 13px; line-height: 19px; }
    .k6 { width: 343px; font-size: 14px; line-height: 21px; padding-left: 18px; margin-bottom: 5px; }
    .k6 code { font-size: 12px; line-height: 21px; }
    .src { display: grid; grid-template-columns: 41px 1fr; width: 358px; height: 112px; overflow: hidden; margin: 6px 0 9px; background: #f6f6f6; padding: 2px 0; }
    pre { margin: 0; font: 400 10px/12px "DejaVu Sans Mono", monospace; color: #222; }
    .no { text-align: right; padding-right: 4px; border-right: 1px solid #ccc; color: #666; }
    .cd { padding-left: 4px; }
    .tag { color: #8a1a7c; } .at { color: #99541a; } .st { color: #22209a; } .gr { color: #b5b5b5; } .rd { color: #c41a3a; }
    .json { width: 358px; height: 77px; padding: 2px 0 3px; overflow: hidden; background: #f0f0f0; font-size: 8px; }`; }
  view() { const t = (s) => `<span class="tag">${s}</span>`, a = s => `<span class="at">${s}</span>`, q = s => `=<span class="st">"${s}"</span>`; return `
    <section class="l"><h2 class="top">Request Message</h2>
      <svg class="box" width="393" height="178" viewBox="461 254 391 176">
        <text class="n" x="488" y="292">METHOD</text><path class="g" d="M498 301h58M548 294l8 7-8 7"/>
        <text x="574" y="306">GET</text><text x="624" y="306">/contact</text><text x="704" y="306">HTTP/1.1</text>
        <path class="g" d="M521 381L613 320M603 318l10 2-2 10"/><text class="n" transform="translate(548 355) rotate(-33)">URL</text>
        <text x="626" y="343">Headers</text><text x="603" y="381">Body(optional)</text></svg>
      <kv-card class="k1"><div>Request URL:  <code>https://www.course-api.com/slides/</code></div><div>Request Method:  <code>GET</code></div><div>Status Code:  <i class="dot"></i> <code>200 OK</code></div><div>Remote Address:  <code>138.68.239.6:443</code></div><div>Referrer Policy:  <code>strict-origin-when-cross-origin</code></div></kv-card>
      <h2>Headers</h2>
      <kv-card class="k2"><div>Pragma:  <code>no-cache</code></div><div>Referer:  <code>https://www.course-api.com/</code></div></kv-card>
      <h2>Body</h2>
      <kv-card class="k3"><div><code>▾</code> Request Payload<small>         view source</small></div><div>   <code>▾{email: "hello@hello.com"}</code></div><div>       <code> <span class="tag">email</span>: "<span class="rd">hello@hello.com</span>"</code></div></kv-card>
    </section>
    <section class="r"><h2 class="top">Response Message</h2>
      <svg class="box" width="397" height="144" viewBox="1062 254 395 142">
        <text x="1123" y="301">HTTP/1.1</text><text x="1209" y="301">200</text><text x="1256" y="301">OK</text>
        <path class="g" d="M1338 295h-39M1306 288l-7 7 7 7M1312 336L1240 310M1249 305l-9 5 4 8"/>
        <text class="n" x="1345" y="291">Status</text><text class="n" x="1352" y="305">Text</text>
        <text class="n" x="1316" y="352">Status</text><text class="n" x="1321" y="366">Code</text>
        <text x="1164" y="338">Headers</text><text x="1141" y="376">Body(optional)</text>
        <path d="M1094 363v8l2-2 1 3 1-1-1-3h2z" fill="#111"/></svg>
      <kv-card class="k4"><div>Request URL:  <code>https://serverless-functions-course.netlify.app/api/6-newsletter</code></div><div>Request Method:  <code>POST</code></div><div>Status Code:  <i class="dot red"></i> <code>400</code></div><div>Remote Address:  <code>104.248.78.24:443</code></div><div>Referrer Policy:  <code>strict-origin-when-cross-origin</code></div></kv-card>
      <h2>Headers</h2>
      <kv-card class="k5"><div>Content-Type:  <code>text/html; charset=UTF-8</code></div></kv-card>
      <kv-card class="k6"><div>Content-Type:  <code>application/json; charset=utf-8</code></div></kv-card>
      <h2>Body</h2>
      <div class="src"><pre class="no">1
2
3
4
5
6
7
8
9</pre><pre class="cd"><span class="gr">&lt;!DOCTYPE html&gt;</span>
${t('&lt;html')} ${a('lang')}${q('en')}${t('&gt;')}
  ${t('&lt;head&gt;')}
    ${t('&lt;meta')} ${a('charset')}${q('UTF-8')} ${t('/&gt;')}
    ${t('&lt;meta')} ${a('name')}${q('viewport')} ${a('content')}=<span class="st">"width=device-wi</span>
    ${t('&lt;title&gt;')}Slides${t('&lt;/title&gt;')}
    ${t('&lt;link')} ${a('rel')}${q('stylesheet')} ${a('href')}${q('./styles.css')} ${t('/&gt;')}
  ${t('&lt;/head&gt;')}
  ${t('&lt;body&gt;')}</pre></div>
      <pre class="json"> "rec6d6T3q5EBIdCfD", name: "Best of Paris in 7 Days Tour",…},…]
{id: "rec6d6T3q5EBIdCfD", name: "Best of Paris in 7 Days Tour",…}
{id: "recIwxrvU9HfJR3B4", name: "Best of Ireland in 14 Days Tour",…}
{id: "recJLWcHScdUtI3ny", name: "Best of Salzburg &amp; Vienna in 8 Days To
{id: "recK2AOoVhIHPLUwn", name: "Best of Rome in 7 Days Tour",…}
{id: "receAEzz86KzW2gvH", name: "Best of Poland in 10 Days Tour",…}</pre>
    </section>`; }
}
class VideoInfo extends Part {
  styles() { return `
    :host { display: flex; flex: 1; min-height: 0; overflow: hidden; gap: 24px; padding: 20px 99px 0; font-family: Roboto, sans-serif; color: #909090; }
    .main { flex: 1; }
    h1 { font: 400 18px/26px Roboto, sans-serif; color: #fff; }
    .row { display: flex; justify-content: space-between; align-items: stretch; height: 47px; border-bottom: 1px solid #303030; font-size: 14px; line-height: 20px; }
    .row p { padding-top: 8px; color: #aaa; }
    .acts { display: flex; font-weight: 500; font-size: 14px; padding-right: 16px; }
    .acts button { gap: 6px; height: 40px; }
    .rate { display: flex; gap: 20px; padding: 0 4px 0 6px; border-bottom: 2px solid #3ea6ff; margin-right: 16px; }
    .rate button:first-child { color: #3ea6ff; }
    .more { display: flex; gap: 20px; }
    .av { width: 48px; height: 48px; border-radius: 50%; background: #0a0a23; margin-top: 16px; }
    aside { width: 402px; margin-top: 4px; border: 1px solid #303030; display: flex; flex-direction: column; color: #fff; }
    .hd { display: flex; align-items: center; justify-content: space-between; height: 48px; flex: none; background: #212121; padding: 0 14px 0 16px; }
    h2 { font: 400 16px/24px Roboto, sans-serif; }
    .list { display: flex; flex: 1; gap: 16px; padding: 4px 4px 0 16px; overflow: hidden; min-height: 0; }
    .th { width: 100px; height: 56px; background: #000; flex: none; margin-top: 4px; }
    .ch { flex: 1; font: 500 14px/20px Roboto, sans-serif; padding-top: 8px; display: flex; flex-direction: column; align-items: flex-start; gap: 6px; }
    .stamp { width: 38px; height: 16px; background: #263850; border-radius: 2px; }
    .list i { width: 8px; border-radius: 4px 4px 0 0; background: #909090; }`; }
  view() { return `
    <div class="main"><h1>Node.js and Express.js - Full Course</h1>
      <div class="row"><p>119,812 views • Apr 1, 2021</p><div class="acts"><div class="rate"><button>${ic('like', 24)}4.9K</button><button>${ic('dislike', 24)}29</button></div>
      <div class="more"><button>${ic('share', 24)}SHARE</button><button>${ic('save', 24)}SAVE</button>${ib('More', 'hdots', 18)}</div></div></div><div class="av"></div></div>
    <aside><div class="hd"><h2>Chapters</h2>${ib('Close', 'thinclose', 18)}</div><div class="list"><span class="th"></span><span class="ch">Introduction<span class="stamp"></span></span><i></i></div></aside>`; }
}

/* ---------- notes app ---------- */
class NotionWindow extends Part {
  styles() { return `
    :host { display: flex; flex-direction: column; overflow: hidden; background: #2f3437; }
    .title { display: flex; align-items: center; gap: 7px; height: 29px; flex: none; background: #fff; color: #999; font-size: 12px; padding: 0 24px 0 4px; }
    .win { display: flex; gap: 44px; }
    .menu { display: flex; gap: 16px; height: 25px; flex: none; background: #292a2e; color: #fff; font-size: 14px; padding-left: 8px; }
    .body { display: flex; flex: 1; min-height: 0; }
    notion-page { flex: 1; min-width: 0; }`; }
  view() { return `
    <div class="title">${ic('notion', 16)}<span>Task List</span><span class="grow"></span><div class="win">${ib('Minimize', 'minimize', 14)}${ib('Restore', 'restore', 14)}${ib('Close', 'thinclose', 14)}</div></div>
    <div class="menu">${['File', 'Edit', 'View', 'Window', 'Help'].map(m => `<button>${m}</button>`).join('')}</div>
    <div class="body"><notion-sidebar></notion-sidebar><notion-page></notion-page></div>`; }
}
class SideItem extends Part {
  styles() { return `
    :host { display: block; height: 34px; }
    button { width: 100%; height: 100%; padding: 0 14px 0 20px; font-weight: 600; color: #9b9da0; }
    .i { width: 22px; display: flex; justify-content: center; margin-right: 13px; }
    .e { width: 28px; display: flex; margin-left: -5px; color: #9b9da0; }
    :host([active]) { background: #474c50; } :host([active]) button { color: #fff; } :host([active]) .i { color: #9b9da0; } :host([active]) .e { color: #292f33; }`; }
  view() {
    const e = this.getAttribute('emoji');
    return `<button><span class="i">${ic(this.getAttribute('icon'), e ? 17 : 18)}</span>${e ? `<span class="e">${ic(e, 19)}</span>` : ''}<slot></slot></button>`;
  }
}
class NotionSidebar extends Part {
  styles() { return `
    :host { display: flex; flex-direction: column; width: 300px; background: linear-gradient(90deg, #2c3032, #373c3f 12px); font-size: 16px; color: #9b9da0; padding: 7px 0 10px; }
    .ws { display: flex; align-items: center; height: 44px; padding: 0 20px; color: #ebebeb; font-weight: 600; white-space: nowrap; margin-bottom: 5px; }
    .j { width: 23px; height: 22px; border-radius: 3px; background: #85888a; color: #37352f; font-size: 13px; font-weight: 400; line-height: 22px; text-align: center; margin-right: 12px; }
    .ws button { color: #9b9da0; } .ws .col { margin-left: auto; }
    .ud { margin-left: 12px; }
    .gap { height: 26px; } .gap.s { height: 25px; }`; }
  view() {
    const tree = [['doc', 'Getting Started'], ['pin', 'Quick Note'], ['house', 'Personal Home'], ['check', 'Task List'], ['journal', 'Journal'], ['book', 'Reading List']];
    const it = (i, t) => `<side-item icon="${i}">${t}</side-item>`;
    return `<div class="ws"><span class="j">J</span>Jeanne Gabrielle's ...${ib('Switch workspace', 'updown', 15, 'ud')}${ib('Collapse', 'doublechev', 18, 'col')}</div>
      ${it('boldsearch', 'Quick Find')}${it('clock', 'All Updates')}${it('cog', 'Settings &amp; Members')}<div class="gap"></div>
      ${tree.map(t => `<side-item icon="tri" emoji="${t[0]}" ${t[1] === 'Task List' ? 'active' : ''}>${t[1]}</side-item>`).join('')}${it('thinplus', 'Add a page')}<div class="gap s"></div>
      ${it('templates', 'Templates')}${it('import', 'Import')}${it('trash', 'Trash')}<span class="grow"></span>${it('thinplus', 'New page')}`;
  }
}
class TaskCard extends Part {
  styles() { return `
    :host { display: block; flex: none; border-radius: 4px; background: #3f4447; box-shadow: 0 0 0 1px rgba(15,15,15,.2), 0 2px 4px rgba(15,15,15,.2); overflow: hidden; }
    a { display: block; min-height: 50px; padding: 11px 13px 13px; font: 600 16px/26px "Open Sans", "Noto Sans", sans-serif; color: #f0f0f0; }`; }
  view() { return `<slot name="preview"></slot><a href="#"><slot></slot></a>`; }
}
class BoardColumn extends Part {
  styles() { return `
    :host { display: flex; flex-direction: column; gap: 10px; width: 325px; flex: none; }
    header { display: flex; align-items: center; height: 30px; padding: 0 7px 0 4px; margin-bottom: 5px; gap: 13px; color: #8c8f91; }
    .tag { display: flex; align-items: center; gap: 5px; height: 22px; border-radius: 3px; padding: 0 7px; color: #f0e6e5; background: var(--tag); }
    .n { flex: 1; color: #85888a; }
    .new { height: 34px; gap: 9px; padding-left: 8px; color: #76797b; margin-top: 4px; align-self: flex-start; }`; }
  view() { return `<header><span class="tag">${this.getAttribute('name')}<slot name="emoji"></slot></span><span class="n">${this.getAttribute('count')}</span>${ib('Options', 'hdots', 18)}${ib('Add', 'thinplus', 16)}</header><slot></slot><button class="new">${ic('thinplus', 16)}New</button>`; }
}
class NotionPage extends Part {
  styles() { return `
    :host { display: flex; flex-direction: column; color: #ebebeb; font-size: 16px; line-height: 26px; position: relative; }
    .top { display: flex; align-items: center; height: 56px; flex: none; padding: 0 21px; gap: 12px; }
    .top .nav { color: #7a7e80; } .top .ck { color: #292f33; margin-left: 5px; }
    .acts { display: flex; gap: 20px; margin-left: auto; align-items: center; }
    .view { flex: 1; min-height: 0; display: flex; overflow: hidden; }
    .scroll { flex: 1; min-width: 0; overflow: hidden; padding-left: 120px; }
    .vb { width: 12px; flex: none; } .vb i { display: block; height: 495px; background: #484d51; }
    .hb { height: 10px; flex: none; } .hb i { display: block; width: 90%; height: 10px; background: #484d51; }
    h1 { display: flex; align-items: center; font: 700 45px/60px "Open Sans", "Noto Sans", sans-serif; gap: 14px; margin-top: 46px; }
    h1 ui-icon { color: #2b3238; }
    .desc { padding: 6px 8px 0; font-size: 17px; }
    .desc p { height: 26px; }
    code { font: 400 14px/22px "DejaVu Sans Mono", monospace; color: #eb5757; background: #3b3f42; border-radius: 3px; padding: 2px 5px; }
    .bar { display: flex; align-items: center; height: 53px; margin-top: 29px; padding-right: 120px; border-bottom: 1px solid #4b5053; color: #9b9da0; padding-left: 8px; gap: 21px; }
    .bar button { gap: 8px; } .bar b { font-weight: 400; color: #ebebeb; margin-left: -4px; }
    .bar .go { background: #2eaadc; color: #fff; border-radius: 3px; height: 30px; font-weight: 600; gap: 0; }
    .go span { padding: 0 10px; line-height: 30px; } .go ui-icon { width: 30px; border-left: 1px solid #4cb8e3; padding: 0 8px; height: 30px; }
    .board { display: flex; gap: 20px; padding-top: 14px; }
    .hid { width: 270px; padding-left: 5px; color: #76797b; line-height: 30px; }
    .hid p { display: flex; align-items: center; gap: 8px; color: #ebebeb; margin: 17px 0 0 7px; height: 30px; }
    .hid p span { color: #85888a; margin-left: 8px; }
    .addg { height: 30px; gap: 8px; color: #76797b; align-self: flex-start; }
    .pv { display: block; height: 184px; background: #4a4f53; border-bottom: 1px solid #565b5f; padding: 14px 8px 0 20px; overflow: hidden; font-size: 14px; line-height: 22px; color: #c6c8c9; }
    .pv ol { list-style: none; } .pv li { display: grid; grid-template-columns: 28px 1fr; margin-bottom: 7px; }
    .help { position: absolute; right: 41px; bottom: 38px; width: 45px; height: 45px; border-radius: 50%; background: #454b4e; color: #fff; font-size: 22px; justify-content: center; box-shadow: 0 2px 6px rgba(0,0,0,.4); }
    .d { vertical-align: -2px; margin-right: 2px; }`; }
  view() {
    const c = t => `<task-card>${t}</task-card>`;
    const li = ['What can I do to prepare for my first<br>day? What should I study before I start?', 'What are the priorities for my first day?<br>first week? first month? first quarter?', 'What should my short-term goals be?', 'What skill will I need to grow?', 'What does success look like?'];
    return `
    <div class="top">${ib('Back', 'thinback', 18, 'nav')}${ib('Forward', 'thinforward', 18, 'nav')}<ui-icon class="ck" name="check" size="18"></ui-icon><span>Task List</span>
      <div class="acts"><button>Share</button><button>Updates</button><button>Favorite</button>${ib('More', 'hdots', 22)}</div></div>
    <div class="view"><div class="scroll">
      <h1>${ic('check', 46)}Task List</h1>
      <div class="desc"><p>Use this template to track your personal tasks.</p><p>Click <code>+ New</code> to create a new task directly on this board.</p><p>Click an existing task to add additional context or subtasks.</p></div>
      <div class="bar"><button>${ic('thinplus', 16)}Add a view</button><span class="grow"></span><button>Properties</button><button>Group by <b>Status</b></button><button>Filter</button><button>Sort</button><button>${ic('search', 16)}Search</button>${ib('More', 'hdots', 18)}<button class="go"><span>New</span>${ic('chevd', 14)}</button></div>
      <div class="board">
        <board-column name="To Do" count="7" style="--tag:#9c5451">${['(Projects) TypeScript', '(Projects) CoffeeScript', '(Projects) Simple Web App', '(Projects) Online Portfolio', '(Bank) Open Retirement Account', '(Job Hunt) Recommendation Letters', '(DMV) Behind The Wheel'].map(c).join('')}</board-column>
        <board-column name="Doing" count="1" style="--tag:#97873b">${c('(Projects) Review APIs')}</board-column>
        <board-column name="Done" count="11" style="--tag:#3f7068"><ui-icon slot="emoji" name="hands" size="18"></ui-icon>
          ${['(Learn) Well-Being at Work', '(Bank) Open BofA account', '(Learn) Watch "Talk Like A Boss"'].map(c).join('')}
          <task-card><div class="pv" slot="preview"><ol>${li.map((t, i) => `<li><span>${i + 1}.</span><span>${t}</span></li>`).join('')}</ol></div><ui-icon class="d" name="doc" size="18"></ui-icon>&nbsp;(Lever) Prepare questions for<br>Missy</task-card>
          ${['(DMV) Review for written exam', '(Lever) Complete Onboarding Tasks', ''].map(c).join('')}</board-column>
        <div class="hid">Hidden columns<p>${ic('inbox', 18)}No Status <span>1</span></p></div>
        <button class="addg">${ic('thinplus', 16)}Add a group</button>
      </div></div><div class="vb"><i></i></div></div>
    <div class="hb"><i></i></div><button class="help">?</button>`;
  }
}

[['ui-icon', UiIcon], ['browser-tab', BrowserTab], ['yt-header', YtHeader], ['kv-card', KvCard], ['slide-deck', SlideDeck], ['screen-share', ScreenShare], ['video-player', VideoPlayer], ['video-info', VideoInfo], ['browser-window', BrowserWindow], ['task-bar', TaskBar], ['side-item', SideItem], ['notion-sidebar', NotionSidebar], ['task-card', TaskCard], ['board-column', BoardColumn], ['notion-page', NotionPage], ['notion-window', NotionWindow], ['dual-desktop', DualDesktop]].forEach(([n, c]) => customElements.define(n, c));
</script>
</body>
</html>
